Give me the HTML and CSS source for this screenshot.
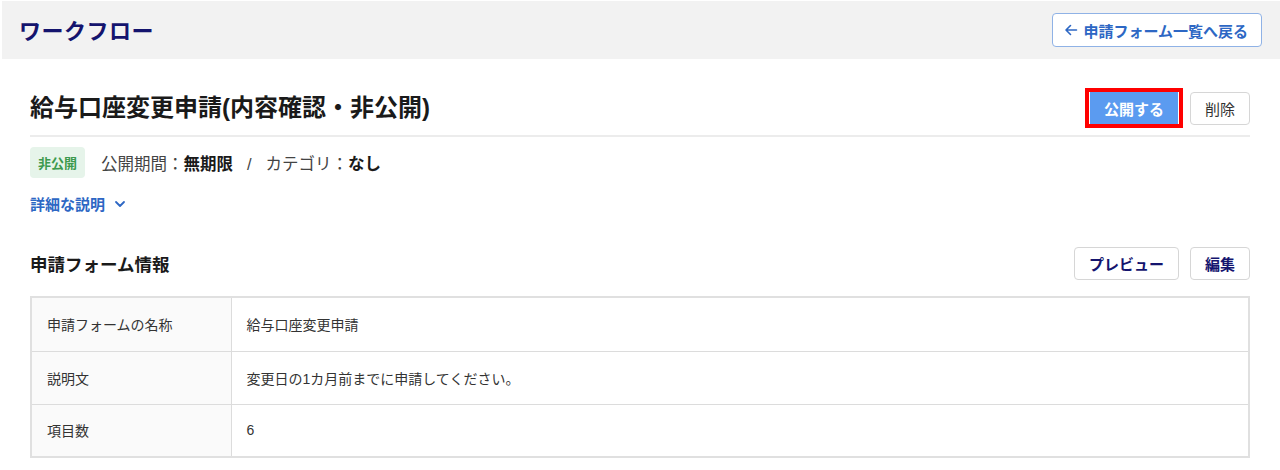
FILE: index.html
```html
<!DOCTYPE html>
<html lang="ja">

<head>
    <meta charset="UTF-8">
    <title>ワークフロー</title>
    <link rel="stylesheet" href="styles.css">
</head>

<body>
    <!-- ヘッダー -->
    <div class="header">
        <h1 class="app-title">ワークフロー</h1>
        <a class="back-btn" href="javascript:;">
            <svg width="14" height="14" viewBox="0 0 14 14"><path d="M12.5 7H2.5M6.5 2.5L2 7l4.5 4.5" fill="none" stroke="currentColor" stroke-width="1.6" stroke-linecap="round" stroke-linejoin="round"/></svg>
            申請フォーム一覧へ戻る
        </a>
    </div>

    <div class="main">
        <!-- タイトル -->
        <div class="title-row">
            <h2 class="page-title">給与口座変更申請(内容確認・非公開)</h2>
            <div class="actions">
                <span class="highlight"><a class="btn btn-primary" href="javascript:;">公開する</a></span>
                <a class="btn" href="javascript:;">削除</a>
            </div>
        </div>

        <div class="meta">
            <span class="badge">非公開</span>
            <span class="meta-text">公開期間：<b>無期限</b><span class="sep">/</span>カテゴリ：<b>なし</b></span>
        </div>

        <a class="detail-link" href="javascript:;">
            詳細な説明
            <svg width="12" height="12" viewBox="0 0 12 12"><path d="M2 4l4 4 4-4" fill="none" stroke="currentColor" stroke-width="1.8" stroke-linecap="round" stroke-linejoin="round"/></svg>
        </a>

        <!-- 申請フォーム情報 -->
        <div class="section-row">
            <h3 class="section-title">申請フォーム情報</h3>
            <div class="actions actions-wide">
                <a class="btn btn-navy" href="javascript:;">プレビュー</a>
                <a class="btn btn-navy" href="javascript:;">編集</a>
            </div>
        </div>

        <table class="info">
            <tr>
                <th>申請フォームの名称</th>
                <td>給与口座変更申請</td>
            </tr>
            <tr>
                <th>説明文</th>
                <td>変更日の1カ月前までに申請してください。</td>
            </tr>
            <tr>
                <th>項目数</th>
                <td>6</td>
            </tr>
        </table>
    </div>
</body>

</html>
```

FILE: styles.css
```css
* {
    margin: 0;
    padding: 0;
    box-sizing: border-box;
}

body {
    font-family: "Liberation Sans", "Noto Sans CJK JP", sans-serif;
    color: #222;
    background-color: #fff;
}

a {
    text-decoration: none;
}

.header {
    height: 58px;
    margin: 1px 0 0 2px;
    background-color: #f2f2f2;
    display: flex;
    align-items: center;
    justify-content: space-between;
    padding: 0 18px 2px 17px;
}

.app-title {
    font-size: 22px;
    font-weight: bold;
    color: #14146e;
    letter-spacing: 0.5px;
}

.back-btn {
    display: flex;
    align-items: center;
    gap: 5px;
    height: 34px;
    margin-top: 2px;
    padding: 0 13px 0 11px;
    background-color: #fff;
    border: 1px solid #8fb2e6;
    border-radius: 4px;
    color: #2d67c4;
    font-size: 15px;
    font-weight: bold;
}

.main {
    padding: 0 30px;
}

.title-row {
    display: flex;
    align-items: flex-end;
    justify-content: space-between;
    height: 78px;
    padding-bottom: 7px;
    border-bottom: 2px solid #ececec;
}

.page-title {
    font-size: 24px;
    line-height: 40px;
    font-weight: bold;
    color: #1a1a1a;
}

.actions {
    display: flex;
    align-items: center;
    gap: 7px;
}

.actions-wide {
    gap: 11px;
}

.highlight {
    display: block;
    border: 4px solid #f00;
    padding: 0 1px;
}

.btn {
    display: flex;
    align-items: center;
    justify-content: center;
    height: 33px;
    padding: 0 14px;
    background-color: #fff;
    border: 1px solid #d6d6d6;
    border-radius: 4px;
    color: #333;
    font-size: 15px;
}

.btn-primary {
    height: 32px;
    padding: 0 14px;
    background-color: #5b9bf0;
    border: none;
    border-radius: 0;
    color: #fff;
    font-weight: bold;
}

.btn-navy {
    color: #14146e;
    font-weight: bold;
}

.meta {
    display: flex;
    align-items: center;
    gap: 16px;
    margin-top: 10px;
}

.badge {
    display: block;
    padding: 6px 8px;
    background-color: #e6f4ea;
    border-radius: 4px;
    color: #3d9a4e;
    font-size: 13px;
    font-weight: bold;
}

.meta-text {
    font-size: 16.5px;
    color: #444;
}

.meta-text b {
    color: #1a1a1a;
}

.sep {
    margin: 0 14px;
}

.detail-link {
    display: inline-flex;
    align-items: center;
    gap: 9px;
    margin-top: 15px;
    color: #2d67c4;
    font-size: 15px;
    font-weight: bold;
}

.section-row {
    display: flex;
    align-items: center;
    justify-content: space-between;
    margin-top: 33px;
}

.section-title {
    font-size: 17.5px;
    font-weight: bold;
    color: #1a1a1a;
}

.info {
    width: 100%;
    margin-top: 16px;
    border-collapse: collapse;
    border: 2px solid #e0e0e0;
    font-size: 14px;
    color: #333;
}

.info th,
.info td {
    height: 53px;
    padding: 0 15px;
    border: 1px solid #dcdcdc;
    text-align: left;
    font-weight: normal;
}

.info tr:first-child th,
.info tr:first-child td {
    height: 54px;
}

.info th {
    width: 200px;
    background-color: #fafafa;
}
```
